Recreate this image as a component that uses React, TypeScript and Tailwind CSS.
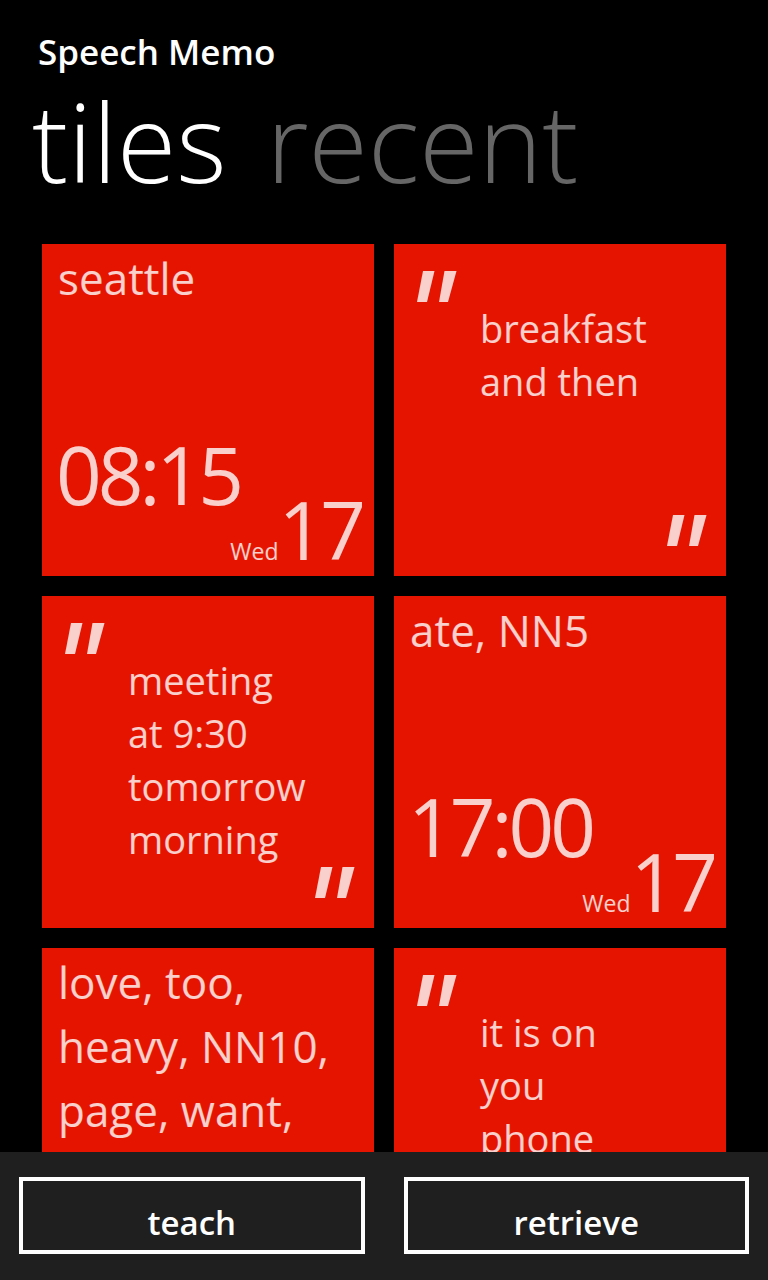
import React from "react";

const font = { fontFamily: '"Open Sans", "Noto Sans", sans-serif' };

const Quote = ({ className }: { className: string }) => (
  <svg viewBox="0 0 40 31" className={`absolute h-[31px] w-[40px] ${className}`}>
    <polygon points="6,0 17.5,0 10,31 0,31" fill="rgba(255,255,255,0.8)" />
    <polygon points="27.5,0 39.5,0 31,31 22,31" fill="rgba(255,255,255,0.8)" />
  </svg>
);

const ClockTile = ({ label, time }: { label: string; time: string }) => (
  <div className="flex h-[332px] flex-col bg-[#e51400] text-white/80">
    <div className="px-[16px] pt-[2px] text-[44px] leading-[64px]">{label}</div>
    <div className="mt-auto px-[14px] text-[80px] leading-[55px] tracking-[-0.05em]">{time}</div>
    <div className="flex items-baseline justify-end pr-[12px] pb-[14px]">
      <span className="text-[23px] leading-[22px]">Wed</span>
      <span className="text-[80px] leading-[56px] tracking-[-0.05em]">17</span>
    </div>
  </div>
);

const QuoteTile = ({ lines }: { lines: string[] }) => (
  <div className="relative h-[332px] bg-[#e51400] text-white/80">
    <Quote className="left-[23px] top-[27px]" />
    <div className="pl-[86px] pt-[58px] text-[38px] leading-[53px]">
      {lines.map((l) => (
        <div key={l}>{l}</div>
      ))}
    </div>
    <Quote className="right-[19px] bottom-[30px]" />
  </div>
);

const WordTile = ({ lines }: { lines: string[] }) => (
  <div className="h-[332px] bg-[#e51400] text-white/80">
    <div className="px-[16px] pt-[2px] text-[44px] leading-[64px]">
      {lines.map((l) => (
        <div key={l}>{l}</div>
      ))}
    </div>
  </div>
);

export default function App() {
  return (
    <div className="flex h-[1280px] w-[768px] flex-col overflow-hidden bg-black text-white" style={font}>
      <div className="pl-[38px] pt-[34px] text-[35px] font-semibold leading-[36px]">Speech Memo</div>
      <div className="mt-[22px] flex gap-[40px] pl-[32px] text-[108px] font-light leading-[100px]">
        <span className="text-white">tiles</span>
        <span className="text-[#666666]">recent</span>
      </div>

      <div className="mt-[52px] min-h-0 flex-1 overflow-hidden">
        <div className="grid grid-cols-2 gap-[20px] px-[42px]">
          <ClockTile label="seattle" time="08:15" />
          <QuoteTile lines={["breakfast", "and then"]} />
          <QuoteTile lines={["meeting", "at 9:30", "tomorrow", "morning"]} />
          <ClockTile label="ate, NN5" time="17:00" />
          <WordTile lines={["love, too,", "heavy, NN10,", "page, want,"]} />
          <QuoteTile lines={["it is on", "you", "phone"]} />
        </div>
      </div>

      <div className="grid h-[128px] shrink-0 grid-cols-2 gap-[39px] bg-[#1f1f1f] px-[19px] pt-[25px]">
        <button className="h-[77px] border-4 border-white pt-[15px] text-[33px] font-semibold leading-[40px] text-white">
          teach
        </button>
        <button className="h-[77px] border-4 border-white pt-[15px] text-[33px] font-semibold leading-[40px] text-white">
          retrieve
        </button>
      </div>
    </div>
  );
}
